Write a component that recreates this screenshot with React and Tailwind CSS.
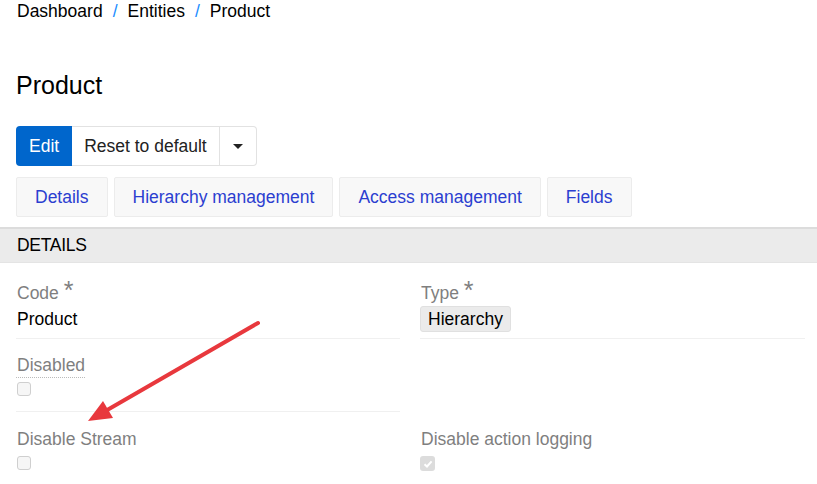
export default function App() {
  const tabs = ['Details', 'Hierarchy management', 'Access management', 'Fields']

  return (
    <div className="relative w-[817px] h-[484px] overflow-hidden bg-white text-[17.5px] text-black" style={{ fontFamily: '"Liberation Sans", Arial, sans-serif' }}>
      {/* Breadcrumb */}
      <div className="flex items-center h-[22px] pl-[17px] leading-[22px]">
        <span>Dashboard</span>
        <span className="px-[10px] text-[#1a8cff]">/</span>
        <span>Entities</span>
        <span className="px-[10px] text-[#1a8cff]">/</span>
        <span>Product</span>
      </div>

      <h1 className="mt-[48px] pl-[16px] text-[25px] leading-[30px]">Product</h1>

      {/* Button group */}
      <div className="mt-[26px] ml-[16px] flex h-[40px] w-max">
        <button className="px-[13px] bg-[#0066cc] text-white rounded-l-[4px]">Edit</button>
        <button className="px-[12px] border border-[#e2e2e2] border-l-0 text-[#222]">Reset to default</button>
        <button className="w-[37px] flex items-center justify-center border border-[#e2e2e2] border-l-0 rounded-r-[4px]">
          <span className="w-0 h-0 border-l-[5px] border-r-[5px] border-t-[5px] border-l-transparent border-r-transparent border-t-[#222]" />
        </button>
      </div>

      {/* Tabs */}
      <div className="mt-[11px] ml-[16px] flex gap-[6px] h-[40px]">
        {tabs.map((t) => (
          <div key={t} className="px-[18px] flex items-center bg-[#f8f8f8] border border-[#ececec] rounded-[2px] text-[#2b3ed0]">
            {t}
          </div>
        ))}
      </div>

      {/* Section header */}
      <div className="mt-[10px] h-[36px] bg-[#ebebeb] border-t-[2px] border-[#dcdcdc] border-b border-b-[#e4e4e4] flex items-center pl-[17px] tracking-[-0.3px]">
        DETAILS
      </div>

      {/* Fields */}
      <div className="grid grid-cols-[384px_385px] gap-x-[20px] pl-[16px]">
        <div className="pt-[18px] h-[76px] border-b border-[#f0f0f0]">
          <div className="text-[#7f7f7f] leading-[24px] pl-[1px]">Code <span className="text-[25px] leading-[10px]">*</span></div>
          <div className="leading-[28px] pl-[1px]">Product</div>
        </div>
        <div className="pt-[18px] h-[76px] border-b border-[#f0f0f0]">
          <div className="text-[#7f7f7f] leading-[24px] pl-[1px]">Type <span className="text-[25px] leading-[10px]">*</span></div>
          <div className="mt-[1px] w-max px-[7px] leading-[24px] bg-[#ebebeb] border border-[#e0e0e0] rounded-[3px]">Hierarchy</div>
        </div>

        <div className="pt-[14px] h-[73px] border-b border-[#f0f0f0]">
          <div className="text-[#7f7f7f] leading-[24px] pl-[1px] w-max border-b border-dotted border-[#bbb]">Disabled</div>
          <div className="mt-[4px] ml-[1px] w-[14px] h-[14px] rounded-[3px] border border-[#cfcfcf] bg-[#f6f6f6]" />
        </div>
        <div className="h-[73px]" />

        <div className="pt-[15px]">
          <div className="text-[#7f7f7f] leading-[24px] pl-[1px]">Disable Stream</div>
          <div className="mt-[5px] ml-[1px] w-[14px] h-[14px] rounded-[3px] border border-[#cfcfcf] bg-[#f6f6f6]" />
        </div>
        <div className="pt-[15px]">
          <div className="text-[#7f7f7f] leading-[24px] pl-[1px]">Disable action logging</div>
          <div className="mt-[5px] ml-[0px] w-[15px] h-[15px] rounded-[3px] bg-[#dcdcdc] flex items-center justify-center">
            <svg width="10" height="10" viewBox="0 0 10 10">
              <path d="M1.5 5.2 L4 7.5 L8.6 2.4" fill="none" stroke="#fff" strokeWidth="2" />
            </svg>
          </div>
        </div>
      </div>

      {/* Annotation arrow */}
      <svg className="absolute left-0 top-0 pointer-events-none" width="817" height="484">
        <line x1="258" y1="323" x2="102" y2="413" stroke="#e8383d" strokeWidth="4" strokeLinecap="round" />
        <polygon points="88,421 103,401 113,418" fill="#e8383d" />
      </svg>
    </div>
  )
}
